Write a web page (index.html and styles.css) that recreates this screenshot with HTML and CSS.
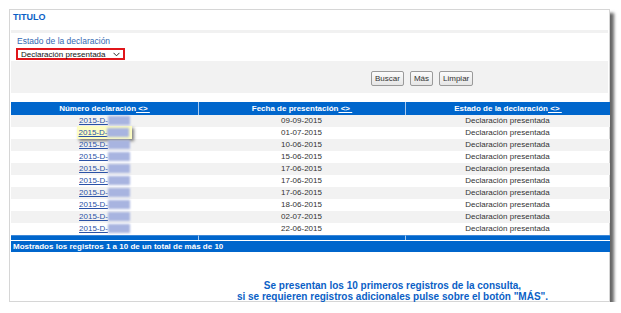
FILE: index.html
```html
<!DOCTYPE html>
<html lang="es">
<head>
    <meta charset="UTF-8">
    <title>Consulta de declaraciones</title>
    <link rel="stylesheet" href="styles.css">
</head>
<body>
    <div class="ventana">
        <div class="titulo">TITULO</div>
        <div class="separador"></div>

        <!-- Filtro -->
        <div class="filtros">
            <label class="etiqueta">Estado de la declaración</label>
            <div class="selector">
                <span>Declaración presentada</span>
                <svg class="flecha" viewBox="0 0 8 5" xmlns="http://www.w3.org/2000/svg">
                    <path d="M0.6 0.6 L4 4 L7.4 0.6" fill="none" stroke="#222" stroke-width="1.1"/>
                </svg>
            </div>
        </div>

        <!-- Botones -->
        <div class="acciones">
            <button class="boton">Buscar</button>
            <button class="boton">Más</button>
            <button class="boton">Limpiar</button>
        </div>

        <!-- Resultados -->
        <table class="resultados">
            <thead>
                <tr>
                    <th class="c1">Número declaración<a class="orden" href="#">&nbsp;&lt;&gt;&nbsp;</a></th>
                    <th class="c2">Fecha de presentación<a class="orden" href="#">&nbsp;&lt;&gt;&nbsp;</a></th>
                    <th class="c3">Estado de la declaración<a class="orden" href="#">&nbsp;&lt;&gt;&nbsp;</a></th>
                </tr>
            </thead>
            <tbody>
                <tr><td><a class="num" href="#">2015-D-<span class="oculto"></span></a></td><td>09-09-2015</td><td>Declaración presentada</td></tr>
                <tr><td><a class="num resaltado" href="#">2015-D-<span class="oculto"></span></a></td><td>01-07-2015</td><td>Declaración presentada</td></tr>
                <tr><td><a class="num" href="#">2015-D-<span class="oculto"></span></a></td><td>10-06-2015</td><td>Declaración presentada</td></tr>
                <tr><td><a class="num" href="#">2015-D-<span class="oculto"></span></a></td><td>15-06-2015</td><td>Declaración presentada</td></tr>
                <tr><td><a class="num" href="#">2015-D-<span class="oculto"></span></a></td><td>17-06-2015</td><td>Declaración presentada</td></tr>
                <tr><td><a class="num" href="#">2015-D-<span class="oculto"></span></a></td><td>17-06-2015</td><td>Declaración presentada</td></tr>
                <tr><td><a class="num" href="#">2015-D-<span class="oculto"></span></a></td><td>17-06-2015</td><td>Declaración presentada</td></tr>
                <tr><td><a class="num" href="#">2015-D-<span class="oculto"></span></a></td><td>18-06-2015</td><td>Declaración presentada</td></tr>
                <tr><td><a class="num" href="#">2015-D-<span class="oculto"></span></a></td><td>02-07-2015</td><td>Declaración presentada</td></tr>
                <tr><td><a class="num" href="#">2015-D-<span class="oculto"></span></a></td><td>22-06-2015</td><td>Declaración presentada</td></tr>
            </tbody>
            <tfoot>
                <tr class="cierre"><td></td><td></td><td></td></tr>
                <tr class="total"><td colspan="3">Mostrados los registros 1 a 10 de un total de más de 10</td></tr>
            </tfoot>
        </table>

        <div class="aviso">
            Se presentan los 10 primeros registros de la consulta,<br>
            si se requieren registros adicionales pulse sobre el botón "MÁS".
        </div>
    </div>
</body>
</html>
```

FILE: styles.css
```css
body {
    margin: 0;
    padding: 0;
    background: #fff;
    font-family: "Liberation Sans", Arial, sans-serif;
}

.ventana {
    box-sizing: border-box;
    width: 601px;
    height: 293px;
    margin: 9px 0 0 9px;
    padding: 0 1px 0 1px;
    background: #fff;
    border: 1px solid #d6d6d6;
    box-shadow: 4px 4px 3px rgba(0, 0, 0, 0.6);
}

.titulo {
    padding: 0 0 6px 2px;
    font-size: 9px;
    font-weight: bold;
    line-height: 14px;
    color: #0b5fc6;
}

.separador {
    height: 3px;
    background: #f1f1f1;
}

.filtros {
    display: flex;
    flex-direction: column;
    align-items: flex-start;
    gap: 2px;
    padding: 3px 0 1px 5px;
}

.etiqueta {
    margin-left: 1px;
    font-size: 8.5px;
    line-height: 10px;
    color: #3368b2;
}

.selector {
    box-sizing: border-box;
    display: flex;
    align-items: center;
    justify-content: space-between;
    width: 109px;
    height: 12px;
    padding: 0 3px 0 3px;
    border: 2px solid #e0161b;
    font-size: 8px;
    color: #111;
}

.flecha {
    width: 7px;
    height: 5px;
}

.acciones {
    display: flex;
    gap: 6px;
    height: 32px;
    box-sizing: border-box;
    padding: 10px 0 0 360px;
    background: #f2f2f2;
}

.boton {
    height: 15px;
    padding: 0 3px;
    border: 1px solid #9a9a9a;
    border-radius: 2px;
    background: linear-gradient(#fbfbfb, #e6e6e6);
    font-family: "Liberation Sans", Arial, sans-serif;
    font-size: 8px;
    color: #333;
}

.resultados {
    width: 597px;
    margin-top: 9px;
    table-layout: fixed;
    border-collapse: separate;
    border-spacing: 0;
    font-size: 8px;
}

.resultados th {
    height: 13px;
    padding: 0;
    background: #0066cc;
    color: #fff;
    font-weight: bold;
    line-height: 13px;
    text-align: center;
}

.resultados .c1 { width: 187px; }
.resultados .c2 { width: 206px; }
.resultados .c3 { width: 204px; }

.resultados th + th,
.cierre td + td {
    border-left: 1px solid #a9c9ee;
}

.orden {
    color: #fff;
    text-decoration: underline;
}

.resultados td {
    height: 12px;
    padding: 0;
    line-height: 12px;
    text-align: center;
    color: #333;
}

.resultados tbody tr:nth-child(odd) td {
    background: #f2f2f2;
}

.num {
    color: #2a52a6;
    text-decoration: underline;
}

.oculto {
    display: inline-block;
    width: 22px;
    height: 9px;
    vertical-align: -2px;
    background: #a8b4e0;
    filter: blur(0.8px);
}

.resaltado {
    padding: 2px 3px 2px 2px;
    background: #fdfdc2;
    box-shadow: 2px 2px 3px rgba(0, 0, 0, 0.5);
}

.resultados .cierre td {
    height: 5px;
    line-height: 5px;
    background: #0066cc;
    border-top: 1px solid #3d88d8;
    box-sizing: border-box;
}

.resultados .total td {
    height: 12px;
    line-height: 11px;
    padding-left: 2px;
    text-align: left;
    color: #fff;
    font-weight: bold;
    background: #0066cc;
    border-top: 1px solid #fff;
    box-sizing: border-box;
}

.aviso {
    padding: 28px 0 0 166px;
    font-size: 10px;
    font-weight: bold;
    line-height: 11px;
    text-align: center;
    color: #0b5fc6;
}
```
